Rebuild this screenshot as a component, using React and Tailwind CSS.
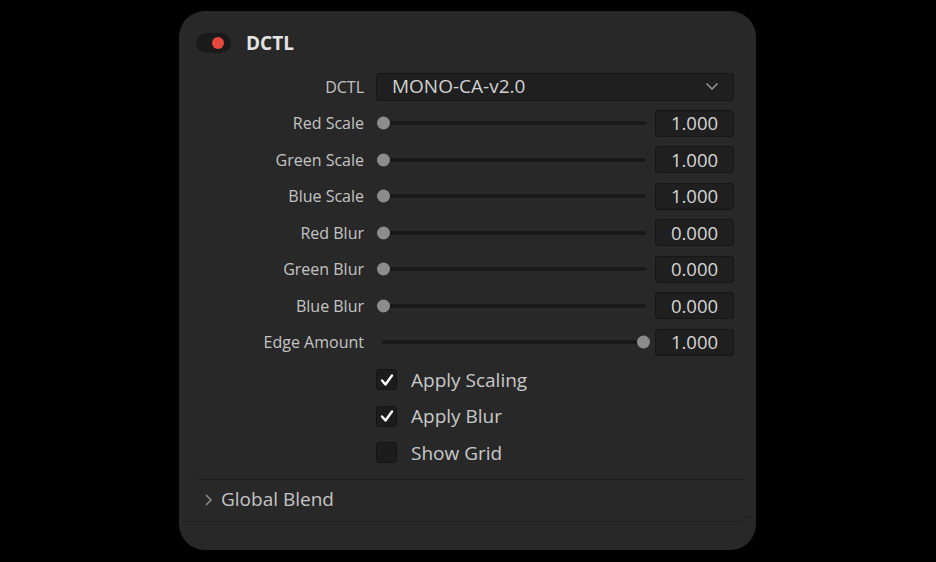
import { useState } from "react";

const SLIDERS = [
  { label: "Red Scale", value: "1.000", pos: 0 },
  { label: "Green Scale", value: "1.000", pos: 0 },
  { label: "Blue Scale", value: "1.000", pos: 0 },
  { label: "Red Blur", value: "0.000", pos: 0 },
  { label: "Green Blur", value: "0.000", pos: 0 },
  { label: "Blue Blur", value: "0.000", pos: 0 },
  { label: "Edge Amount", value: "1.000", pos: 1 },
];

const CHECKS = [
  { label: "Apply Scaling", on: true },
  { label: "Apply Blur", on: true },
  { label: "Show Grid", on: false },
];

function Check() {
  return (
    <svg width="14" height="14" viewBox="0 0 14 14" fill="none">
      <path d="M2 7.5 L5.5 11.5 L12 2.5" stroke="#ffffff" strokeWidth="2.4" strokeLinecap="round" strokeLinejoin="round" />
    </svg>
  );
}

function Slider({ pos }) {
  return (
    <div className="relative h-full w-[274px]">
      <div className="absolute left-[6px] right-[4px] top-1/2 h-[4px] -translate-y-1/2 rounded-full bg-[#191919]" />
      <div
        className={`absolute top-1/2 h-[13px] w-[13px] -translate-y-1/2 rounded-full bg-[#8c8c8c] ${pos ? "left-[261px]" : "left-[1px]"}`}
      />
    </div>
  );
}

export default function App() {
  const [checks] = useState(CHECKS);

  return (
    <div
      className="flex h-screen w-full items-start bg-black pl-[179px] pt-[11px]"
      style={{ fontFamily: "'Open Sans', 'Noto Sans', sans-serif" }}
    >
      <div className="flex h-[539px] w-[577px] flex-col rounded-[26px] bg-[#282828] pt-[22px]">
        {/* Header */}
        <div className="flex h-[20px] items-center pl-[17px]">
          <div className="flex h-[20px] w-[35px] items-center justify-end rounded-full bg-[#1a1a1a] pr-[7px]">
            <div className="h-[12px] w-[12px] rounded-full bg-[#e8473d]" />
          </div>
          <span className="ml-[15px] text-[19px] font-bold leading-none text-[#e4e4e4]">DCTL</span>
        </div>

        {/* DCTL select */}
        <div className="mt-[15px] flex h-[37px] items-center">
          <div className="w-[185px] text-right text-[16px] text-[#c4c4c4]">DCTL</div>
          <div className="ml-[12px] flex h-[28px] w-[358px] items-center justify-between rounded-[3px] border border-[#161616] bg-[#1f1f1f] pl-[15px] pr-[14px]">
            <span className="text-[19px] text-[#d2d2d2]">MONO-CA-v2.0</span>
            <svg width="14" height="9" viewBox="0 0 14 9" fill="none">
              <path d="M1.5 1.5 L7 7 L12.5 1.5" stroke="#9a9a9a" strokeWidth="1.5" />
            </svg>
          </div>
        </div>

        {/* Sliders */}
        {SLIDERS.map((s) => (
          <div key={s.label} className="flex h-[36.5px] items-center">
            <div className="w-[185px] text-right text-[16px] text-[#c4c4c4]">{s.label}</div>
            <div className="ml-[12px] flex h-full items-center">
              <Slider pos={s.pos} />
              <div className="ml-[5px] flex h-[27px] w-[79px] items-center justify-center rounded-[3px] border border-[#161616] bg-[#1f1f1f] text-[18.5px] text-[#d6d6d6]">
                {s.value}
              </div>
            </div>
          </div>
        ))}

        {/* Checkboxes */}
        <div className="pt-[1px]">
          {checks.map((c) => (
            <div key={c.label} className="flex h-[36.5px] items-center pl-[197px]">
              <div className="flex h-[21px] w-[21px] items-center justify-center rounded-[3px] border border-[#141414] bg-[#1c1c1c]">
                {c.on && <Check />}
              </div>
              <span className="ml-[14px] text-[19px] text-[#c8c8c8]">{c.label}</span>
            </div>
          ))}
        </div>

        {/* Global Blend */}
        <div className="ml-[18px] mr-[12px] mt-[8px] h-px bg-[#1e1e1e]" />
        <div className="flex h-[41px] items-center pb-[2px] pl-[25px]">
          <svg width="9" height="14" viewBox="0 0 9 14" fill="none">
            <path d="M2 2 L7 7 L2 12" stroke="#8a8a8a" strokeWidth="1.5" />
          </svg>
          <span className="ml-[8px] text-[19px] text-[#c4c4c4]">Global Blend</span>
        </div>
        <div className="relative ml-[4px] mr-[13px] h-px bg-[#1e1e1e]">
          <div className="absolute -right-[10px] -top-[5px] h-px w-[9px] bg-[#1e1e1e]" />
        </div>
      </div>
    </div>
  );
}
